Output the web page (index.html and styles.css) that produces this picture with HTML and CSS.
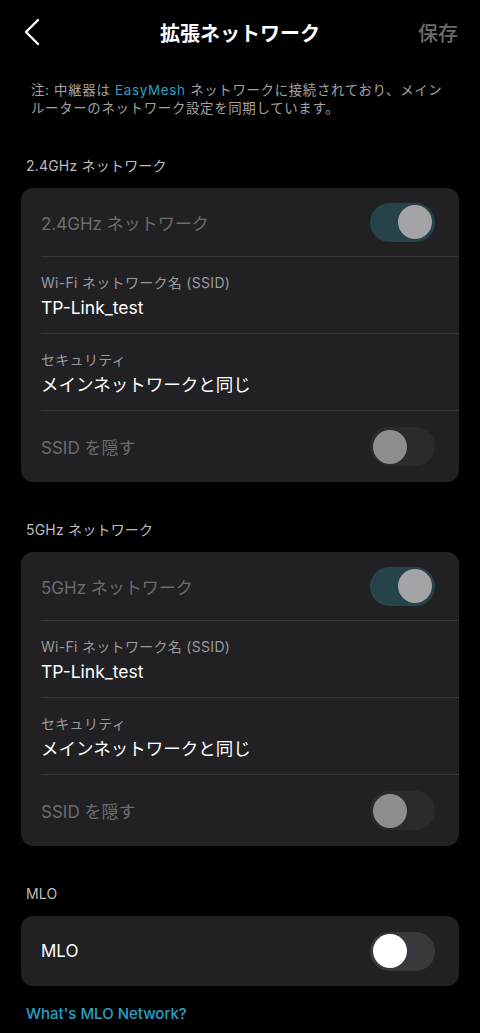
FILE: index.html
```html
<!DOCTYPE html>
<html lang="ja">
<head>
  <meta charset="UTF-8">
  <meta name="viewport" content="width=device-width, initial-scale=1.0">
  <title>拡張ネットワーク</title>
  <link rel="stylesheet" href="styles.css">
</head>
<body>
  <div class="header">
    <svg class="back" width="20" height="30" viewBox="0 0 20 30">
      <polyline points="14,3 2,15 14,27" fill="none" stroke="#fff" stroke-width="2.4" stroke-linecap="round" stroke-linejoin="round"/>
    </svg>
    <h1>拡張ネットワーク</h1>
    <span class="save">保存</span>
  </div>

  <p class="note">注: 中継器は <span class="accent">EasyMesh</span> ネットワークに接続されており、メイン<br>ルーターのネットワーク設定を同期しています。</p>

  <div class="section-title">2.4GHz ネットワーク</div>
  <div class="card">
    <div class="row">
      <span class="row-label dim">2.4GHz ネットワーク</span>
      <span class="toggle on disabled"><span class="knob"></span></span>
    </div>
    <div class="row stacked">
      <span class="sub">Wi-Fi ネットワーク名 (SSID)</span>
      <span class="value">TP-Link_test</span>
    </div>
    <div class="row stacked">
      <span class="sub">セキュリティ</span>
      <span class="value">メインネットワークと同じ</span>
    </div>
    <div class="row">
      <span class="row-label dim">SSID を隠す</span>
      <span class="toggle disabled"><span class="knob"></span></span>
    </div>
  </div>

  <div class="section-title">5GHz ネットワーク</div>
  <div class="card">
    <div class="row">
      <span class="row-label dim">5GHz ネットワーク</span>
      <span class="toggle on disabled"><span class="knob"></span></span>
    </div>
    <div class="row stacked">
      <span class="sub">Wi-Fi ネットワーク名 (SSID)</span>
      <span class="value">TP-Link_test</span>
    </div>
    <div class="row stacked">
      <span class="sub">セキュリティ</span>
      <span class="value">メインネットワークと同じ</span>
    </div>
    <div class="row">
      <span class="row-label dim">SSID を隠す</span>
      <span class="toggle disabled"><span class="knob"></span></span>
    </div>
  </div>

  <div class="section-title">MLO</div>
  <div class="card">
    <div class="row">
      <span class="row-label">MLO</span>
      <span class="toggle"><span class="knob"></span></span>
    </div>
  </div>

  <a class="link" href="#">What's MLO Network?</a>
</body>
</html>
```

FILE: styles.css
```css
body {
  margin: 0;
  background: #000;
  color: #fff;
  font-family: Inter, "Noto Sans CJK JP", sans-serif;
}

.header {
  height: 64px;
  display: flex;
  align-items: center;
  justify-content: space-between;
  padding: 0 22px 0 24px;
  position: relative;
}

.back {
  display: block;
}

.header h1 {
  position: absolute;
  left: 0;
  right: 0;
  margin: 0;
  text-align: center;
  font-size: 20px;
  font-weight: 700;
  pointer-events: none;
}

.save {
  font-size: 20px;
  font-weight: 500;
  color: #6b6b6b;
}

.note {
  margin: 17px 0 0;
  padding: 0 10px 0 31px;
  font-size: 13.4px;
  line-height: 18px;
  letter-spacing: 0.7px;
  color: #a3a3a3;
}

.accent {
  color: #2aa1c4;
}

.section-title {
  margin: 39px 0 12px 26px;
  font-size: 14px;
  line-height: 20px;
  letter-spacing: 0.2px;
  color: #bdbdbd;
}

.card + .section-title {
  margin-top: 38px;
}

.card {
  margin: 0 21px;
  background: #212123;
  border-radius: 12px;
}

.row {
  margin-left: 20px;
  padding-right: 24px;
  min-height: 68px;
  display: flex;
  align-items: center;
  justify-content: space-between;
  border-bottom: 1px solid #353537;
}

.row:last-child {
  border-bottom: none;
  min-height: 71px;
}

.card .row:only-child {
  min-height: 70px;
}

.row.stacked {
  flex-direction: column;
  align-items: flex-start;
  justify-content: flex-start;
  min-height: 0;
  padding-top: 16px;
  padding-bottom: 12px;
}

.row-label {
  font-size: 17px;
  color: #fff;
}

.row-label.dim {
  color: #6c6c6e;
}

.sub {
  font-size: 14px;
  line-height: 20px;
  letter-spacing: 0.3px;
  color: #9a9a9c;
  margin-bottom: 2px;
}

.value {
  font-size: 17.5px;
  line-height: 26px;
  color: #fff;
}

.toggle {
  width: 65px;
  height: 39px;
  border-radius: 20px;
  background: #39393d;
  display: flex;
  align-items: center;
  padding: 0 3px;
  box-sizing: border-box;
}

.toggle .knob {
  width: 34px;
  height: 34px;
  border-radius: 50%;
  background: #fff;
}

.toggle.on {
  justify-content: flex-end;
}

.toggle.disabled {
  background: #2b2b2d;
}

.toggle.disabled .knob {
  background: #8e8e90;
}

.toggle.on.disabled {
  background: #27434a;
}

.toggle.on.disabled .knob {
  background: #a4a4a6;
}

.link {
  display: block;
  margin: 18px 0 0 26px;
  font-size: 15px;
  line-height: 20px;
  font-weight: 500;
  color: #2aa1c4;
  text-decoration: none;
}
```
